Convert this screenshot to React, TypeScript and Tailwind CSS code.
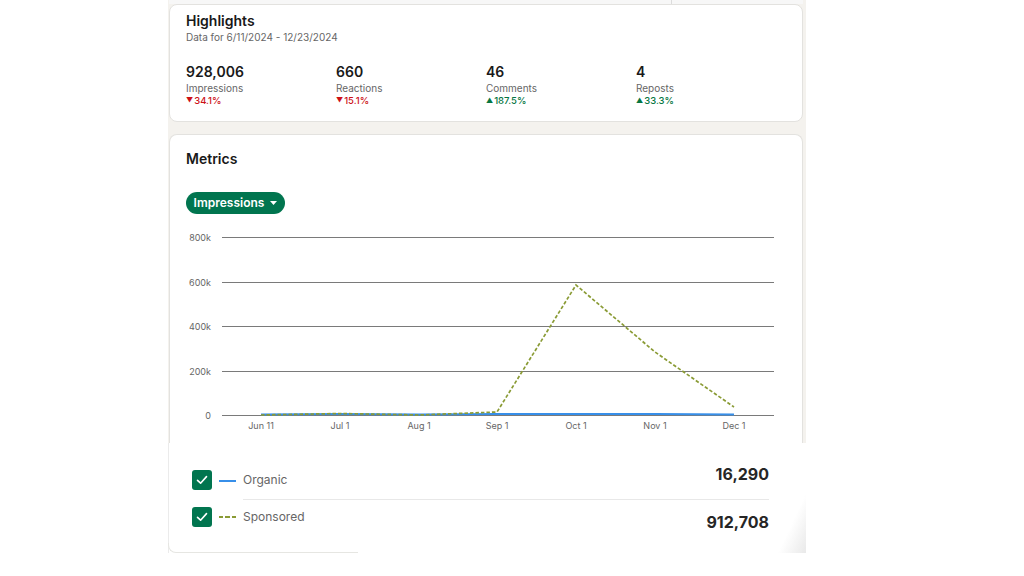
const font = { fontFamily: "Inter, 'Noto Sans', sans-serif" };

const stats = [
  { value: "928,006", label: "Impressions", change: "34.1%", up: false },
  { value: "660", label: "Reactions", change: "15.1%", up: false },
  { value: "46", label: "Comments", change: "187.5%", up: true },
  { value: "4", label: "Reposts", change: "33.3%", up: true },
];

const yTicks = [
  { label: "800k", y: 12 },
  { label: "600k", y: 57 },
  { label: "400k", y: 101 },
  { label: "200k", y: 146 },
  { label: "0", y: 190 },
];

const xTicks = [
  { label: "Jun 11", x: 91 },
  { label: "Jul 1", x: 170 },
  { label: "Aug 1", x: 249 },
  { label: "Sep 1", x: 327 },
  { label: "Oct 1", x: 406 },
  { label: "Nov 1", x: 485 },
  { label: "Dec 1", x: 564 },
];

function Check() {
  return (
    <div className="w-[20px] h-[20px] rounded-[3px] bg-[#01754f] flex items-center justify-center shrink-0">
      <svg width="12" height="12" viewBox="0 0 12 12" fill="none">
        <path d="M1.5 6.3 L4.6 9.2 L10.5 2.6" stroke="white" strokeWidth="1.6" strokeLinecap="round" strokeLinejoin="round" />
      </svg>
    </div>
  );
}

function Chart() {
  return (
    <svg width="634" height="218" viewBox="0 0 634 218" className="block mt-[11px]">
      {yTicks.map((t) => (
        <g key={t.label}>
          <line x1="52" x2="604" y1={t.y + 0.5} y2={t.y + 0.5} stroke="#7a7a7a" strokeWidth="1" />
          <text x="41" y={t.y + 3.5} textAnchor="end" fontSize="9" fill="#666" style={font}>
            {t.label}
          </text>
        </g>
      ))}
      {xTicks.map((t) => (
        <text key={t.label} x={t.x} y="204" textAnchor="middle" fontSize="9" fill="#666" style={font}>
          {t.label}
        </text>
      ))}
      <polyline
        points="91,189.5 170,189 249,189.5 327,189 406,189 485,189 564,189.5"
        fill="none"
        stroke="#378fe9"
        strokeWidth="2"
      />
      <polyline
        points="91,190 170,188.5 249,190 327,187 406,60 485,127 564,182"
        fill="none"
        stroke="#8a9b35"
        strokeWidth="1.7"
        strokeDasharray="3.5 2"
      />
    </svg>
  );
}

export default function App() {
  return (
    <div className="w-[1024px] h-[576px] bg-white overflow-hidden" style={font}>
      <div className="ml-[168px] w-[638px]">
        <div className="bg-[#f4f2ee] pl-[1px] pr-[3px]">
          <div className="h-[4px] flex bg-[#f7f7f7]">
            <div className="w-[503px] border-r border-[#dcdcdc]" />
          </div>

          <div className="bg-white rounded-lg border border-[#e3e2df] h-[118px] pt-[7px] px-[16px]">
            <h2 className="text-[14px] leading-[18px] font-semibold text-[#191919]">Highlights</h2>
            <p className="text-[10px] leading-[14px] text-[#666]">Data for 6/11/2024 - 12/23/2024</p>
            <div className="flex mt-[19px]">
              {stats.map((s) => (
                <div key={s.label} className="w-[150px]">
                  <div className="text-[14px] leading-[18px] font-semibold text-[#191919]">{s.value}</div>
                  <div className="text-[10px] leading-[14px] text-[#666]">{s.label}</div>
                  <div
                    className={
                      "text-[9.5px] leading-[12px] font-medium flex items-center gap-[1px] " +
                      (s.up ? "text-[#057642]" : "text-[#cc1016]")
                    }
                  >
                    <span className="text-[7px]">{s.up ? "▲" : "▼"}</span>
                    {s.change}
                  </div>
                </div>
              ))}
            </div>
          </div>

          <div className="h-[12px]" />

          <div className="bg-white rounded-t-lg border border-b-0 border-[#e3e2df] h-[309px] pt-[15px]">
            <h2 className="px-[16px] text-[14px] leading-[18px] font-semibold text-[#191919]">Metrics</h2>
            <div className="px-[16px] mt-[24px]">
              <button className="h-[22px] w-[99px] rounded-full bg-[#01754f] text-white text-[12px] font-semibold flex items-center justify-center gap-[6px]">
                Impressions
                <svg width="7" height="4" viewBox="0 0 7 4">
                  <path d="M0 0 H7 L3.5 4 Z" fill="white" />
                </svg>
              </button>
            </div>
            <Chart />
          </div>
        </div>

        <div className="relative h-[110px] border-l border-[#ebebeb] pl-[23px] pr-[37px] pt-[18px]">
          <div className="absolute left-[-1px] bottom-[0px] w-[190px] h-[10px] border-l border-b border-[#e6e6e2] rounded-bl-lg" />
          <div className="absolute right-0 bottom-0 w-[28px] h-[60px] bg-gradient-to-br from-white via-white to-[#e9e9e9]" />
          <div className="flex items-start h-[38px]">
            <div className="mt-[9px]">
              <Check />
            </div>
            <div className="mt-[19px] ml-[7px] w-[17px] h-[2px] bg-[#378fe9]" />
            <div className="mt-[11px] ml-[7px] text-[12px] leading-[16px] text-[#666]">Organic</div>
            <div className="ml-auto mt-[3px] text-[16px] leading-[20px] font-bold text-[#262626]">16,290</div>
          </div>
          <div className="ml-[51px] h-[1px] bg-[#e8e8e8]" />
          <div className="flex items-start h-[40px]">
            <div className="mt-[7px]">
              <Check />
            </div>
            <div className="mt-[16px] ml-[7px] w-[17px] flex gap-[2px]">
              <div className="w-[4.5px] h-[1.5px] bg-[#8a9b35]" />
              <div className="w-[4.5px] h-[1.5px] bg-[#8a9b35]" />
              <div className="w-[4.5px] h-[1.5px] bg-[#8a9b35]" />
            </div>
            <div className="mt-[9px] ml-[7px] text-[12px] leading-[16px] text-[#666]">Sponsored</div>
            <div className="ml-auto mt-[12px] text-[16px] leading-[20px] font-bold text-[#262626]">912,708</div>
          </div>
        </div>
      </div>
    </div>
  );
}
